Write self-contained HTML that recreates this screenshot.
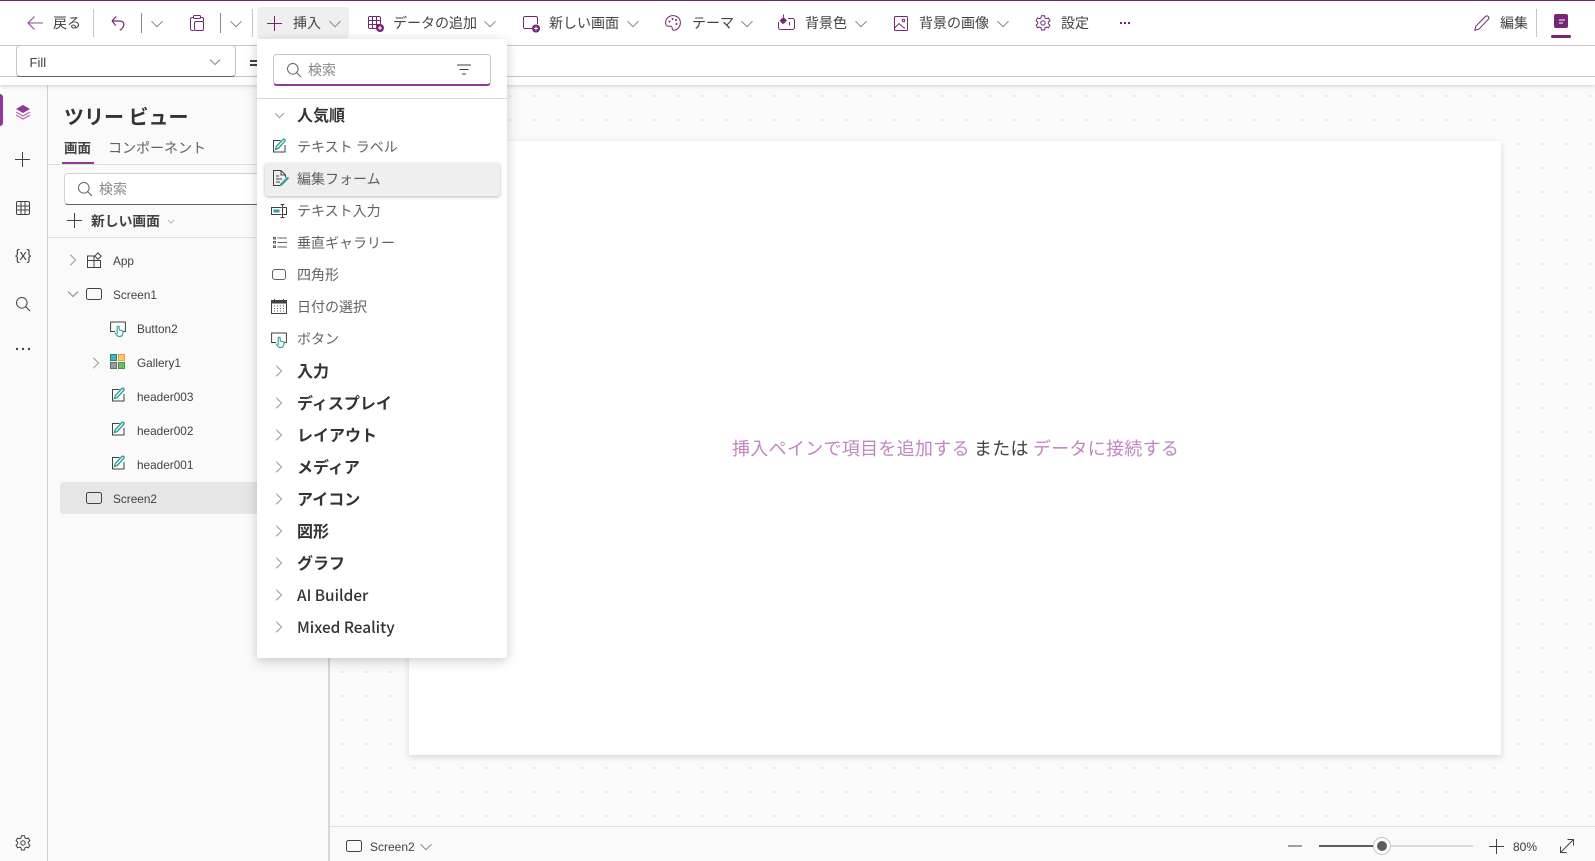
<!DOCTYPE html>
<html lang="ja"><head><meta charset="utf-8"><title>Power Apps</title>
<style>
html,body{margin:0;padding:0;background:#fafafa;width:1595px;height:861px;overflow:hidden}
body{position:relative;font-family:"Liberation Sans","Noto Sans CJK JP",sans-serif;color:#3b3a39}
.a{position:absolute}
.t{position:absolute;white-space:nowrap;line-height:20px;height:20px;font-size:14px;color:#424242;font-family:"Noto Sans CJK JP",sans-serif}
.l{position:absolute;white-space:nowrap;line-height:20px;height:20px;font-size:11.8px;color:#424242;font-family:"Liberation Sans",sans-serif}
.h{position:absolute;white-space:nowrap;line-height:20px;height:20px;font-size:16px;font-weight:700;color:#333;font-family:"Noto Sans CJK JP",sans-serif}
.h2{font-weight:500;font-size:15.4px}
.sep{position:absolute;width:1px;background:#8a8886}
svg.i{position:absolute;overflow:visible;fill:none}
</style></head><body>
<svg width="0" height="0" style="position:absolute">
<defs>
<symbol id="cd" viewBox="0 0 12 8" overflow="visible"><path d="M1 1.500 6 6.500l5-5" fill="none" stroke="#8a8886" stroke-width="1"/></symbol>
<symbol id="cdp" viewBox="0 0 12 8" overflow="visible"><path d="M.5 1.2 6 6.700l5.500-5.500" fill="none" stroke="#7f7f9a" stroke-width="1"/></symbol>
<symbol id="cr" viewBox="0 0 8 12" overflow="visible"><path d="M1.300.7 6.500 6l-5.200 5.300" fill="none" stroke="#a19f9d" stroke-width="1.100"/></symbol>
<symbol id="lbl" viewBox="0 0 16 16" overflow="visible"><path d="M9.500 2.500H2.500v11.500H14V7" fill="none" stroke="#424242" stroke-width="1"/><path d="M4.500 11.500 5.300 8.600 11.800 1.600c.6-.6 1.400-.6 1.900-.1s.5 1.200 0 1.800L7.300 10.400z" fill="#fff" stroke="#2aa198" stroke-width="1.400"/></symbol>
<symbol id="btn" viewBox="0 0 16 16" overflow="visible"><path d="M5 10.500H.6V1h14.800v9.500H13" fill="none" stroke="#424242" stroke-width="1"/><path d="M7.200 13V6.200c0-1.400 2-1.400 2 0V9l2.800.6c.8.2 1.200.8 1.100 1.600-.3 3-1.400 4.400-3.600 4.400-2.400 0-3.400-1.600-4.400-4" fill="#fff" stroke="#2aa198" stroke-width="1.100"/></symbol>
<symbol id="scr" viewBox="0 0 16 12" overflow="visible"><rect x=".5" y=".5" width="15" height="11" rx="2" fill="none" stroke="#424242"/></symbol>
</defs></svg>

<!-- Canvas background -->
<svg class="a" style="left:329px;top:85px" width="1266" height="741">
<defs><pattern id="dots" x="-324" y="-86" width="24" height="24" patternUnits="userSpaceOnUse"><rect x="0" y="0" width="2" height="2" fill="#e1e1e1"/></pattern></defs>
<rect width="1266" height="741" fill="#fafafa"/><rect width="1266" height="741" fill="url(#dots)"/>
</svg>
<div class="a" style="left:409px;top:141px;width:1092px;height:614px;background:#fff;box-shadow:0 2px 6px rgba(0,0,0,.14)"></div>
<div class="a" style="left:732px;top:435px;height:26px;line-height:26px;font-size:18px;letter-spacing:.3px;white-space:nowrap;font-family:'Noto Sans CJK JP',sans-serif;color:#424242"><span style="color:#c286c2">挿入ペインで項目を追加する</span><span style="margin-left:4px;">または</span><span style="margin-left:4px;color:#c286c2">データに接続する</span></div>

<!-- status bar -->
<div class="a" style="left:329px;top:826px;width:1266px;height:35px;background:#fafafa;border-top:1px solid #e1dfdd;box-sizing:border-box"></div>
<svg class="i" style="left:346px;top:840px" width="16" height="12"><use href="#scr"/></svg>
<div class="l" style="left:370px;top:837px;font-size:12px">Screen2</div>
<svg class="i" style="left:420px;top:843px" width="12" height="8"><use href="#cdp"/></svg>
<div class="a" style="left:1288px;top:845px;width:14px;height:2px;background:#a19f9d"></div>
<div class="a" style="left:1319px;top:845px;width:154px;height:2px;background:#d9d9d9"></div>
<div class="a" style="left:1319px;top:845px;width:63px;height:2px;background:#605e5c"></div>
<div class="a" style="left:1374px;top:838px;width:16px;height:16px;box-sizing:border-box;border-radius:50%;background:#605e5c;border:3px solid #fff;box-shadow:0 0 0 1px #c8c6c4"></div>
<svg class="i" style="left:1489px;top:839px" width="15" height="15"><path d="M7.500 0v15M0 7.500h15" stroke="#424242"/></svg>
<div class="l" style="left:1513px;top:837px;font-size:12px;color:#3b3a39">80%</div>
<svg class="i" style="left:1560px;top:839px" width="14" height="14"><path d="M.5 13.500 13.500.5M7.500.5h6v6M.5 7.500v6h6" stroke="#424242"/></svg>

<!-- Left rail -->
<div class="a" style="left:0;top:85px;width:47px;height:776px;background:#fafafa;border-right:1px solid #d1d1d1"></div>
<div class="a" style="left:0;top:94px;width:3px;height:32px;background:#8e3a96;border-radius:0 3px 3px 0"></div>
<svg class="i" style="left:16px;top:105px" width="14" height="15"><path d="M7 0 14 4 7 8 0 4z" fill="#8e3a96"/><path d="M0 7l7 4 7-4M0 10l7 4 7-4" stroke="#b56db8" stroke-width="1.200"/></svg>
<svg class="i" style="left:15px;top:152px" width="15" height="15"><path d="M7.500 0v15M0 7.500h15" stroke="#424242"/></svg>
<svg class="i" style="left:16px;top:201px" width="14" height="14"><rect x=".5" y=".5" width="13" height="13" rx="1.500" stroke="#424242"/><path d="M5 .5v13M9 .5v13M.5 5h13M.5 9h13" stroke="#424242"/></svg>
<div class="a" style="left:13px;top:247px;width:20px;height:18px;line-height:18px;text-align:center;font-size:14.500px;color:#424242;white-space:nowrap;letter-spacing:-.3px;font-family:'Liberation Sans',sans-serif">{x}</div>
<svg class="i" style="left:16px;top:297px" width="14" height="14"><circle cx="5.800" cy="5.800" r="5.300" stroke="#424242"/><path d="M9.500 9.500 14 14" stroke="#424242" stroke-width="1.100"/></svg>
<svg class="i" style="left:15px;top:347px" width="16" height="4"><circle cx="2" cy="2" r="1.200" fill="#424242"/><circle cx="8" cy="2" r="1.200" fill="#424242"/><circle cx="14" cy="2" r="1.200" fill="#424242"/></svg>
<svg class="i" style="left:15px;top:835px" width="16" height="16" viewBox="0 0 16 16"><path d="M6.500.8h3l.5 2.200 1.300.7 2.100-.7 1.500 2.600-1.600 1.500v1.600l1.600 1.500-1.500 2.600-2.100-.7-1.300.7-.5 2.200h-3l-.5-2.200-1.300-.7-2.100.7L1.100 10.200l1.600-1.500V7.100L1.100 5.600l1.500-2.600 2.100.7L6 3z" stroke="#424242"/><circle cx="8" cy="7.900" r="2.200" stroke="#424242"/></svg>

<!-- Tree panel -->
<div class="a" style="left:48px;top:85px;width:280px;height:776px;background:#fafafa;border-right:2px solid #d8d8d8;box-sizing:content-box"></div>
<div class="t" style="left:64px;top:104px;height:24px;line-height:24px;font-size:20px;font-weight:700;color:#333">ツリー ビュー</div>
<div class="t" style="left:64px;top:137px;font-weight:700;font-size:13.500px;color:#424242">画面</div>
<div class="t" style="left:108px;top:138px;color:#616161;font-size:14px">コンポーネント</div>
<div class="a" style="left:48px;top:164px;width:280px;height:1px;background:#e1dfdd"></div>
<div class="a" style="left:62px;top:162px;width:32px;height:2px;background:#8e3a96"></div>
<div class="a" style="left:64px;top:173px;width:240px;height:32px;box-sizing:border-box;background:#fff;border:1px solid #d1d1d1;border-bottom-color:#616161;border-radius:4px"></div>
<svg class="i" style="left:78px;top:182px" width="14" height="14"><circle cx="5.800" cy="5.800" r="5.300" stroke="#616161"/><path d="M9.500 9.500 14 14" stroke="#616161"/></svg>
<div class="t" style="left:99px;top:179px;color:#8a8886;font-size:14px">検索</div>
<svg class="i" style="left:67px;top:213px" width="15" height="15"><path d="M7.500 0v15M0 7.500h15" stroke="#424242"/></svg>
<div class="t" style="left:91px;top:210px;font-weight:700;font-size:13.800px;color:#424242">新しい画面</div>
<svg class="i" style="left:167px;top:219px" width="8" height="5" viewBox="0 0 12 8"><use href="#cd"/></svg>
<div class="a" style="left:48px;top:237px;width:280px;height:1px;background:#e1dfdd"></div>

<div class="a" style="left:60px;top:482px;width:268px;height:32px;background:#e6e6e6;border-radius:4px 0 0 4px"></div>

<svg class="i" style="left:69px;top:254px" width="8" height="12"><use href="#cr"/></svg>
<svg class="i" style="left:87px;top:253px" width="15" height="15"><path d="M8 3H.5v11.500h13V7.500H.5M7 3v11.500" stroke="#424242"/><rect x="8.800" y=".8" width="4.500" height="4.500" transform="rotate(45 11 3)" fill="#fafafa" stroke="#424242"/></svg>
<div class="l" style="left:113px;top:251px">App</div>
<svg class="i" style="left:67px;top:290px" width="12" height="8"><use href="#cd"/></svg>
<svg class="i" style="left:86px;top:288px" width="16" height="12"><use href="#scr"/></svg>
<div class="l" style="left:113px;top:285px">Screen1</div>
<svg class="i" style="left:110px;top:321px" width="16" height="16"><use href="#btn"/></svg>
<div class="l" style="left:137px;top:319px">Button2</div>
<svg class="i" style="left:92px;top:357px" width="8" height="12"><use href="#cr"/></svg>
<svg class="i" style="left:110px;top:354px" width="15" height="15"><rect x=".5" y=".5" width="6" height="6" fill="#47b5ad" stroke="#1a8a82"/><rect x="8.500" y=".5" width="6" height="6" fill="#ffc66b" stroke="#e8a33d"/><rect x=".5" y="8.500" width="6" height="6" fill="#9b9b9b" stroke="#6b6b6b"/><rect x="8.500" y="8.500" width="6" height="6" fill="#6cbd6c" stroke="#3f9a3f"/></svg>
<div class="l" style="left:137px;top:353px">Gallery1</div>
<svg class="i" style="left:110px;top:387px" width="16" height="16"><use href="#lbl"/></svg>
<div class="l" style="left:137px;top:387px">header003</div>
<svg class="i" style="left:110px;top:421px" width="16" height="16"><use href="#lbl"/></svg>
<div class="l" style="left:137px;top:421px">header002</div>
<svg class="i" style="left:110px;top:455px" width="16" height="16"><use href="#lbl"/></svg>
<div class="l" style="left:137px;top:455px">header001</div>
<svg class="i" style="left:86px;top:492px" width="16" height="12"><use href="#scr"/></svg>
<div class="l" style="left:113px;top:489px">Screen2</div>

<!-- top bars -->
<div class="a" style="left:0;top:0;width:1595px;height:85px;background:#fff;box-shadow:0 1px 4px rgba(0,0,0,.18)"></div>
<div class="a" style="left:0;top:0;width:1595px;height:1px;background:#742774"></div>
<div class="a" style="left:0;top:45px;width:1595px;height:1px;background:#c8c6c4"></div>
<div class="a" style="left:0;top:76px;width:1595px;height:1px;background:#c8c6c4"></div>

<svg class="i" style="left:27px;top:16px" width="16" height="14"><path d="M16 7H1M7.500.5 1 7l6.500 6.500" stroke="#8e4a96" stroke-width="1.100"/></svg>
<div class="t" style="left:53px;top:13px">戻る</div>
<div class="sep" style="left:93px;top:9px;height:28px;background:#c8c6c4"></div>
<svg class="i" style="left:111px;top:15px" width="14" height="16"><path d="M1 6h7.500c5.500 0 6 5.500.3 9.300M1 6 5.200 1.500M1 6l3.800 4.500" stroke="#742774" stroke-width="1.200"/></svg>
<div class="sep" style="left:141px;top:13px;height:20px"></div>
<svg class="i" style="left:151px;top:20px" width="12" height="8"><use href="#cdp"/></svg>
<svg class="i" style="left:190px;top:15px" width="14" height="16"><path d="M3.500 2.500H2a1.500 1.500 0 0 0-1.500 1.500v10A1.500 1.500 0 0 0 2 15.500h2M10.500 2.500H12A1.500 1.500 0 0 1 13.500 4v2.500" stroke="#742774"/><rect x="3.500" y=".5" width="7" height="3" rx="1" stroke="#742774"/><rect x="4.500" y="6.500" width="9" height="9" rx="1.500" stroke="#742774"/></svg>
<div class="sep" style="left:220px;top:13px;height:20px"></div>
<svg class="i" style="left:230px;top:20px" width="12" height="8"><use href="#cdp"/></svg>
<div class="sep" style="left:252px;top:9px;height:28px;background:#c8c6c4"></div>

<div class="a" style="left:257px;top:7px;width:92px;height:32px;background:#efefef;border-radius:4px"></div>
<svg class="i" style="left:267px;top:16px" width="15" height="15"><path d="M7.500 0v15M0 7.500h15" stroke="#742774"/></svg>
<div class="t" style="left:293px;top:13px">挿入</div>
<svg class="i" style="left:329px;top:20px" width="12" height="8"><use href="#cdp"/></svg>

<svg class="i" style="left:368px;top:16px" width="16" height="16"><rect x=".5" y=".5" width="12" height="12" rx="1.500" stroke="#742774"/><path d="M4.500.5v12M8.500.5v12M.5 4.500h12M.5 8.500h12" stroke="#742774"/><circle cx="12" cy="12" r="4" fill="#742774"/><path d="M12 10v4M10 12h4" stroke="#fff"/></svg>
<div class="t" style="left:393px;top:13px">データの追加</div>
<svg class="i" style="left:484px;top:20px" width="12" height="8"><use href="#cdp"/></svg>

<svg class="i" style="left:523px;top:16px" width="16" height="16"><path d="M9 12.500H2a1.500 1.500 0 0 1-1.500-1.500V2A1.500 1.500 0 0 1 2 .5h11A1.500 1.500 0 0 1 14.500 2v6" stroke="#742774"/><circle cx="13" cy="12.500" r="4" fill="#742774"/><path d="M13 10.500v4M11 12.500h4" stroke="#fff"/></svg>
<div class="t" style="left:549px;top:13px">新しい画面</div>
<svg class="i" style="left:627px;top:20px" width="12" height="8"><use href="#cdp"/></svg>

<svg class="i" style="left:665px;top:15px" width="16" height="16"><path d="M8 .6C3.800.6.600 3.700.600 7.800c0 3.100 2.100 3.700 3.600 3.400 1.700-.3 3 .3 3 2 0 1.500 1 2.300 2.300 2 3.300-.7 5.900-3.900 5.900-7.500C15.400 3.700 12.200.6 8 .6z" stroke="#742774"/><circle cx="4.500" cy="6.500" r="1" fill="#742774"/><circle cx="7.500" cy="4" r="1" fill="#742774"/><circle cx="11" cy="5" r="1" fill="#742774"/><circle cx="11.500" cy="9" r="1" fill="#742774"/></svg>
<div class="t" style="left:692px;top:13px">テーマ</div>
<svg class="i" style="left:741px;top:20px" width="12" height="8"><use href="#cdp"/></svg>

<svg class="i" style="left:778px;top:14px" width="17" height="16"><path d="M10 4.500h4.500a2 2 0 0 1 2 2v7a2 2 0 0 1-2 2h-12a2 2 0 0 1-2-2V8" stroke="#742774"/><path d="M1.500 6.500 5.500 3l3.500 3.500-3 3-1.500.5z" fill="#742774"/><path d="M5.500 3V.5" stroke="#742774"/><path d="M11.500 8v3.500" stroke="#742774"/></svg>
<div class="t" style="left:805px;top:13px">背景色</div>
<svg class="i" style="left:855px;top:20px" width="12" height="8"><use href="#cdp"/></svg>

<svg class="i" style="left:894px;top:16px" width="14" height="15"><rect x=".5" y=".5" width="13" height="14" rx="1" stroke="#742774"/><path d="M.5 12 5 7.500l4 3.500M9 11l2 1.500" stroke="#742774"/><circle cx="9.500" cy="4.500" r="1.300" stroke="#742774"/></svg>
<div class="t" style="left:919px;top:13px">背景の画像</div>
<svg class="i" style="left:997px;top:20px" width="12" height="8"><use href="#cdp"/></svg>

<svg class="i" style="left:1035px;top:15px" width="16" height="16" viewBox="0 0 16 16"><path d="M6.500.8h3l.5 2.200 1.300.7 2.100-.7 1.500 2.600-1.600 1.500v1.600l1.600 1.500-1.500 2.600-2.100-.7-1.300.7-.5 2.200h-3l-.5-2.200-1.300-.7-2.100.7L1.100 10.200l1.600-1.500V7.100L1.100 5.600l1.500-2.600 2.100.7L6 3z" stroke="#742774"/><circle cx="8" cy="7.900" r="2.200" stroke="#742774"/></svg>
<div class="t" style="left:1061px;top:13px">設定</div>
<svg class="i" style="left:1120px;top:22px" width="11" height="3"><rect width="2" height="2" fill="#742774"/><rect x="4" width="2" height="2" fill="#742774"/><rect x="8" width="2" height="2" fill="#742774"/></svg>

<svg class="i" style="left:1474px;top:15px" width="16" height="16"><path d="M.8 15.200l1-4L11.500 1.500c.8-.8 2-.8 2.800 0s.8 2 0 2.800L4.800 14.200z" stroke="#742774"/></svg>
<div class="t" style="left:1500px;top:13px">編集</div>
<div class="sep" style="left:1536px;top:9px;height:28px;background:#c8c6c4"></div>
<svg class="i" style="left:1554px;top:14px" width="14" height="14"><rect width="14" height="14" rx="2" fill="#742774"/><path d="M5 6h6M5 9h4" stroke="#fff"/></svg>
<div class="a" style="left:1551px;top:35px;width:20px;height:3px;background:#742774;border-radius:2px"></div>

<!-- Formula bar -->
<div class="a" style="left:16px;top:45px;width:220px;height:32px;box-sizing:border-box;background:#fff;border:1px solid #c8c6c4;border-bottom-color:#616161;border-radius:4px"></div>
<div class="l" style="left:29.500px;top:52px;font-size:13px;line-height:21px">Fill</div>
<svg class="i" style="left:209px;top:58px" width="12" height="8"><use href="#cd"/></svg>
<div class="a" style="left:250px;top:60px;width:8px;height:2px;background:#424242;box-shadow:0 4px 0 #424242"></div>

<!-- Insert menu -->
<div class="a" style="left:257px;top:39px;width:250px;height:619px;background:#fff;border-radius:2px;box-shadow:0 3px 12px rgba(0,0,0,.2)"></div>
<div class="a" style="left:273px;top:54px;width:218px;height:32px;box-sizing:border-box;background:#fff;border:1px solid #c8c6c4;border-bottom:2px solid #8e3a96;border-radius:4px"></div>
<svg class="i" style="left:287px;top:63px" width="14" height="14"><circle cx="5.800" cy="5.800" r="5.300" stroke="#616161"/><path d="M9.500 9.500 14 14" stroke="#616161"/></svg>
<div class="t" style="left:308px;top:60px;color:#8a8886;font-size:14px">検索</div>
<svg class="i" style="left:457px;top:64px" width="14" height="11"><path d="M0 1h14M2.500 5.500h9M5 10h4" stroke="#424242"/></svg>
<div class="a" style="left:257px;top:98px;width:250px;height:1px;background:#d8d8d8"></div>

<svg class="i" style="left:274px;top:112px" width="11" height="7" viewBox="0 0 12 8"><use href="#cd"/></svg>
<div class="h" style="left:297px;top:104px">人気順</div>

<svg class="i" style="left:271px;top:138px" width="16" height="16"><use href="#lbl"/></svg>
<div class="t" style="left:297px;top:137px;color:#616161">テキスト ラベル</div>

<div class="a" style="left:265px;top:163px;width:235px;height:33px;background:#efefef;border-radius:3px;box-shadow:0 1px 3px rgba(0,0,0,.28)"></div>
<svg class="i" style="left:272px;top:170px" width="17" height="18"><path d="M9 .5H1.500v15H8M9 .5 13.500 5v2.500M9 .5V5h4.500M4 6h3M4 9h6M4 12h4" stroke="#424242" fill="none"/><path d="M7.500 16.500l.8-2.800 6.500-6.500c.5-.5 1.200-.5 1.700 0s.5 1.200 0 1.700L10 15.500z" fill="#2aa198"/></svg>
<div class="t" style="left:297px;top:169px;color:#616161">編集フォーム</div>

<svg class="i" style="left:271px;top:204px" width="16" height="14"><path d="M10.500 3.500H.5v7h10" stroke="#424242"/><rect x="2.500" y="5.500" width="6" height="3" fill="#2aa198"/><path d="M11.500 1v12M9.500.5h4M9.500 13.500h4M11.500 3.500h4v7h-4" stroke="#424242"/></svg>
<div class="t" style="left:297px;top:201px;color:#616161">テキスト入力</div>

<svg class="i" style="left:273px;top:237px" width="14" height="11"><path d="M4.500 1H14M4.500 5.500H14M4.500 10H14" stroke="#616161"/><rect x=".5" y=".5" width="2" height="1.500" stroke="#616161"/><rect x=".5" y="4.500" width="2" height="1.500" stroke="#616161"/><rect x=".5" y="9" width="2" height="1.500" stroke="#616161"/></svg>
<div class="t" style="left:297px;top:233px;color:#616161">垂直ギャラリー</div>

<svg class="i" style="left:272px;top:269px" width="14" height="11"><rect x=".5" y=".5" width="13" height="10" rx="2.500" stroke="#616161"/></svg>
<div class="t" style="left:297px;top:265px;color:#616161">四角形</div>

<svg class="i" style="left:271px;top:299px" width="16" height="15"><rect x=".5" y="1.500" width="15" height="13" stroke="#424242"/><path d="M.5 2h15V4.500H.5z" fill="#424242"/><path d="M3.500 0v2M12.500 0v2" stroke="#424242"/><path d="M3 7h1M6 7h1M9 7h1M12 7h1M3 9.500h1M6 9.500h1M9 9.500h1M12 9.500h1M3 12h1M6 12h1M9 12h1M12 12h1" stroke="#616161"/></svg>
<div class="t" style="left:297px;top:297px;color:#616161">日付の選択</div>

<svg class="i" style="left:271px;top:332px" width="16" height="16"><use href="#btn"/></svg>
<div class="t" style="left:297px;top:329px;color:#616161">ボタン</div>

<svg class="i" style="left:275px;top:365px" width="8" height="12"><use href="#cr"/></svg><div class="h" style="left:297px;top:360px">入力</div>
<svg class="i" style="left:275px;top:397px" width="8" height="12"><use href="#cr"/></svg><div class="h" style="left:297px;top:392px">ディスプレイ</div>
<svg class="i" style="left:275px;top:429px" width="8" height="12"><use href="#cr"/></svg><div class="h" style="left:297px;top:424px">レイアウト</div>
<svg class="i" style="left:275px;top:461px" width="8" height="12"><use href="#cr"/></svg><div class="h" style="left:297px;top:456px">メディア</div>
<svg class="i" style="left:275px;top:493px" width="8" height="12"><use href="#cr"/></svg><div class="h" style="left:297px;top:488px">アイコン</div>
<svg class="i" style="left:275px;top:525px" width="8" height="12"><use href="#cr"/></svg><div class="h" style="left:297px;top:520px">図形</div>
<svg class="i" style="left:275px;top:557px" width="8" height="12"><use href="#cr"/></svg><div class="h" style="left:297px;top:552px">グラフ</div>
<svg class="i" style="left:275px;top:589px" width="8" height="12"><use href="#cr"/></svg><div class="h h2" style="left:297px;top:585px">AI Builder</div>
<svg class="i" style="left:275px;top:621px" width="8" height="12"><use href="#cr"/></svg><div class="h h2" style="left:297px;top:617px">Mixed Reality</div>
</body></html>
